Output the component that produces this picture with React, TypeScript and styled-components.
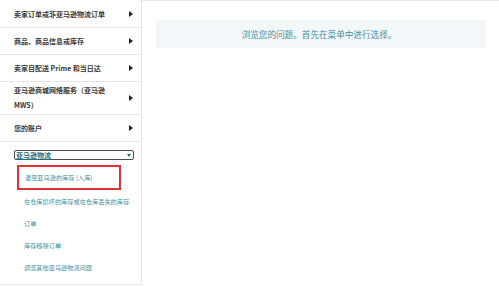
import React from "react";
import styled, { createGlobalStyle } from "styled-components";

const Global = createGlobalStyle`
  html, body { margin: 0; padding: 0; background: #fff; }
  body { font-family: "Noto Sans CJK SC", "Noto Sans", sans-serif; }
`;

const Page = styled.div`
  display: flex;
  width: 499px;
  height: 287px;
  overflow: hidden;
`;

const Sidebar = styled.nav`
  width: 142px;
  flex: none;
  height: 285px;
  box-sizing: border-box;
  border-right: 1px solid #e4e4e4;
  border-bottom: 1px solid #e4e4e4;
  display: flex;
  flex-direction: column;
  padding-top: 1px;
`;

const Row = styled.div`
  display: flex;
  align-items: center;
  justify-content: space-between;
  min-height: 27px;
  padding: 1px 8px 1px 14px;
  box-sizing: border-box;
  border-bottom: 1px solid #e6e6e6;
  font-size: 7px;
  line-height: 15px;
  font-weight: 700;
  color: #3a3a3a;
`;

const RowText = styled.span`
  max-width: 100px;
`;

const Arrow = styled.span`
  width: 0;
  height: 0;
  border-top: 3px solid transparent;
  border-bottom: 3px solid transparent;
  border-left: 4.5px solid #222;
  flex: none;
`;

const Expanded = styled.div`
  padding: 8px 7px 0 14px;
  display: flex;
  flex-direction: column;
`;

const SelectBox = styled.div`
  display: flex;
  align-items: center;
  justify-content: space-between;
  height: 10px;
  box-sizing: border-box;
  border: 1px solid #4a4a4a;
  border-radius: 2px;
  padding: 0 2px 0 1px;
  font-size: 7px;
  line-height: 8px;
  color: #1f6f86;
  font-weight: 700;
`;

const SelectText = styled.span`
  text-decoration: underline;
  text-decoration-color: #1f6f86;
`;

const Caret = styled.span`
  width: 0;
  height: 0;
  border-left: 2.5px solid transparent;
  border-right: 2.5px solid transparent;
  border-top: 3.5px solid #2a6f80;
`;

const SubList = styled.div`
  display: flex;
  flex-direction: column;
  margin-top: 5px;
  margin-left: 3px;
`;

const SubItem = styled.div<{ $active?: boolean }>`
  height: ${(p) => (p.$active ? "25px" : "22px")};
  box-sizing: border-box;
  display: flex;
  align-items: center;
  padding-left: ${(p) => (p.$active ? "6px" : "7px")};
  font-size: 6.2px;
  color: #3f8fa5;
  white-space: nowrap;
  border: ${(p) => (p.$active ? "2px solid #e03333" : "none")};
  width: ${(p) => (p.$active ? "104px" : "auto")};
`;

const Main = styled.main`
  flex: 1;
  border-top: 1px solid #e8e8e8;
  height: 1px;
  padding: 19px 13px 0 14px;
`;

const InfoBox = styled.div`
  height: 28px;
  background: #f2f7f9;
  display: flex;
  align-items: center;
  justify-content: center;
  font-size: 8.6px;
  color: #4890a4;
  padding-right: 4px;
`;

const rows = [
  "卖家订单或非亚马逊物流订单",
  "商品、商品信息或库存",
  "卖家自配送 Prime 和当日达",
  "亚马逊商城网络服务（亚马逊 MWS）",
  "您的账户",
];

const subs = [
  "退至亚马逊的库存 (入库)",
  "在仓库损坏的库存或在仓库丢失的库存",
  "订单",
  "库存移除订单",
  "调查其他亚马逊物流问题",
];

export default function App() {
  return (
    <>
      <Global />
      <Page>
        <Sidebar>
          {rows.map((r) => (
            <Row key={r}>
              <RowText>{r}</RowText>
              <Arrow />
            </Row>
          ))}
          <Expanded>
            <SelectBox>
              <SelectText>亚马逊物流</SelectText>
              <Caret />
            </SelectBox>
            <SubList>
              {subs.map((s, i) => (
                <SubItem key={s} $active={i === 0}>
                  {s}
                </SubItem>
              ))}
            </SubList>
          </Expanded>
        </Sidebar>
        <Main>
          <InfoBox>浏览您的问题。首先在菜单中进行选择。</InfoBox>
        </Main>
      </Page>
    </>
  );
}
